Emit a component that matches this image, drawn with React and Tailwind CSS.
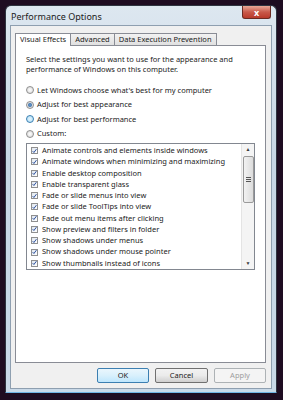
import { useState } from 'react';

const effects = [
  'Animate controls and elements inside windows',
  'Animate windows when minimizing and maximizing',
  'Enable desktop composition',
  'Enable transparent glass',
  'Fade or slide menus into view',
  'Fade or slide ToolTips into view',
  'Fade out menu items after clicking',
  'Show preview and filters in folder',
  'Show shadows under menus',
  'Show shadows under mouse pointer',
  'Show thumbnails instead of icons',
];

const modes = [
  "Let Windows choose what's best for my computer",
  'Adjust for best appearance',
  'Adjust for best performance',
  'Custom:',
];

function Radio({ checked, hover }) {
  return (
    <span
      className={
        'w-[8px] h-[8px] rounded-full border flex items-center justify-center shrink-0 ' +
        (hover
          ? 'border-[#3c7fb1] bg-[radial-gradient(circle,#e6f5fd,#a9dcf6)]'
          : 'border-[#8f8f8f] bg-[radial-gradient(circle,#ffffff,#d4d4d4)]')
      }
    >
      {checked && <span className="w-[4px] h-[4px] rounded-full bg-[radial-gradient(circle,#6fa3d6,#1c4f8a)]" />}
    </span>
  );
}

function Check() {
  return (
    <span className="w-[7px] h-[7px] border border-[#8f8f8f] bg-[linear-gradient(135deg,#dfe6ee,#ffffff)] flex items-center justify-center shrink-0">
      <svg width="6" height="6" viewBox="0 0 6 6">
        <path d="M0.8 3.2 L2.3 4.8 L5.3 0.8" fill="none" stroke="#2a4e9c" strokeWidth="1.2" />
      </svg>
    </span>
  );
}

export default function App() {
  const [mode, setMode] = useState(1);

  return (
    <div className="w-[283px] h-[400px] bg-[#1e0c21] pt-[5px] pl-[5px] font-['Noto_Sans',sans-serif]">
      <div className="w-[272px] h-[388px] rounded-t-[6px] border border-[#2e3440] bg-[linear-gradient(180deg,#dde7f0,#c7d6e5_40%,#c9d9e8)] flex flex-col border-b-[#6fb5e4]">
        {/* Title bar */}
        <div className="h-[19px] flex justify-between pl-[5px] pr-[5px] shrink-0">
          <span className="text-[9px] text-[#1b1b1b] mt-[5px] leading-[11px]">Performance Options</span>
          <div className="w-[29px] h-[13px] rounded-b-[3px] border border-t-0 border-[#6b2a22] bg-[linear-gradient(180deg,#e8a898,#c9594a_50%,#b93a2b)] flex items-center justify-center text-white text-[9px] font-bold leading-none">
            x
          </div>
        </div>

        {/* Client area */}
        <div className="flex-1 mx-[4px] mb-[3px] bg-[#f0f0f0] border border-[#8e9fb0] flex flex-col pl-[4px] pr-[5px] pt-[6px]">
          {/* Tabs */}
          <div className="flex items-end h-[13px] text-[7.5px] text-[#1b1b1b] leading-none">
            <div className="h-[13px] px-[4px] bg-white border border-b-0 border-[#898c95] flex items-center relative z-10 -mb-px">
              Visual Effects
            </div>
            <div className="h-[12px] px-[4px] bg-[linear-gradient(180deg,#f2f2f2,#e0e0e0)] border border-l-0 border-b-0 border-[#898c95] flex items-center">
              Advanced
            </div>
            <div className="h-[12px] px-[4px] bg-[linear-gradient(180deg,#f2f2f2,#e0e0e0)] border border-l-0 border-b-0 border-[#898c95] flex items-center">
              Data Execution Prevention
            </div>
          </div>

          {/* Panel */}
          <div className="h-[318px] bg-white border border-[#898c95] pl-[10px] pr-[8px] pt-[8px] text-[7.5px] text-[#1b1b1b]">
            <p className="leading-[10px]">
              Select the settings you want to use for the appearance and performance of Windows on this computer.
            </p>

            <div className="mt-[9px] flex flex-col">
              {modes.map((m, i) => (
                <button
                  key={m}
                  type="button"
                  onClick={() => setMode(i)}
                  className="h-[14.5px] flex items-center gap-[3px] text-left"
                >
                  <Radio checked={mode === i} hover={i === 2} />
                  <span>{m}</span>
                </button>
              ))}
            </div>

            {/* List */}
            <div className="mt-[2px] h-[127px] mr-[2px] border border-[#828790] flex">
              <div className="flex-1 flex flex-col pl-[4px] pt-px">
                {effects.map((e) => (
                  <div key={e} className="h-[11.45px] flex items-center gap-[4px] whitespace-nowrap">
                    <Check />
                    <span>{e}</span>
                  </div>
                ))}
              </div>
              <div className="w-[13px] bg-[#f4f4f4] border-l border-[#e4e4e4] flex flex-col items-center">
                <span className="h-[12px] text-[5px] text-[#3a3a3a] flex items-center">▲</span>
                <div className="w-[11px] h-[47px] rounded-[2px] border border-[#9a9a9a] bg-[linear-gradient(90deg,#f2f2f2,#dcdcdc)] flex flex-col items-center justify-center gap-px">
                  <span className="w-[5px] h-px bg-[#555]" />
                  <span className="w-[5px] h-px bg-[#555]" />
                  <span className="w-[5px] h-px bg-[#555]" />
                </div>
                <span className="mt-auto h-[10px] text-[5px] text-[#3a3a3a] flex items-center">▼</span>
              </div>
            </div>
          </div>

          {/* Buttons */}
          <div className="flex justify-end gap-[6px] mt-[5px] text-[7.5px]">
            <button type="button" className="w-[52px] h-[15px] rounded-[2px] border border-[#3c7fb1] bg-[linear-gradient(180deg,#eaf6fd,#d9f0fc_50%,#bee6fd)] text-[#1b1b1b]">
              OK
            </button>
            <button type="button" className="w-[53px] h-[15px] rounded-[2px] border border-[#707070] bg-[linear-gradient(180deg,#f2f2f2,#ebebeb_50%,#cfcfcf)] text-[#1b1b1b]">
              Cancel
            </button>
            <button type="button" className="w-[52px] h-[15px] rounded-[2px] border border-[#adb2b5] bg-[#f4f4f4] text-[#9d9d9d]">
              Apply
            </button>
          </div>
        </div>
      </div>
    </div>
  );
}
